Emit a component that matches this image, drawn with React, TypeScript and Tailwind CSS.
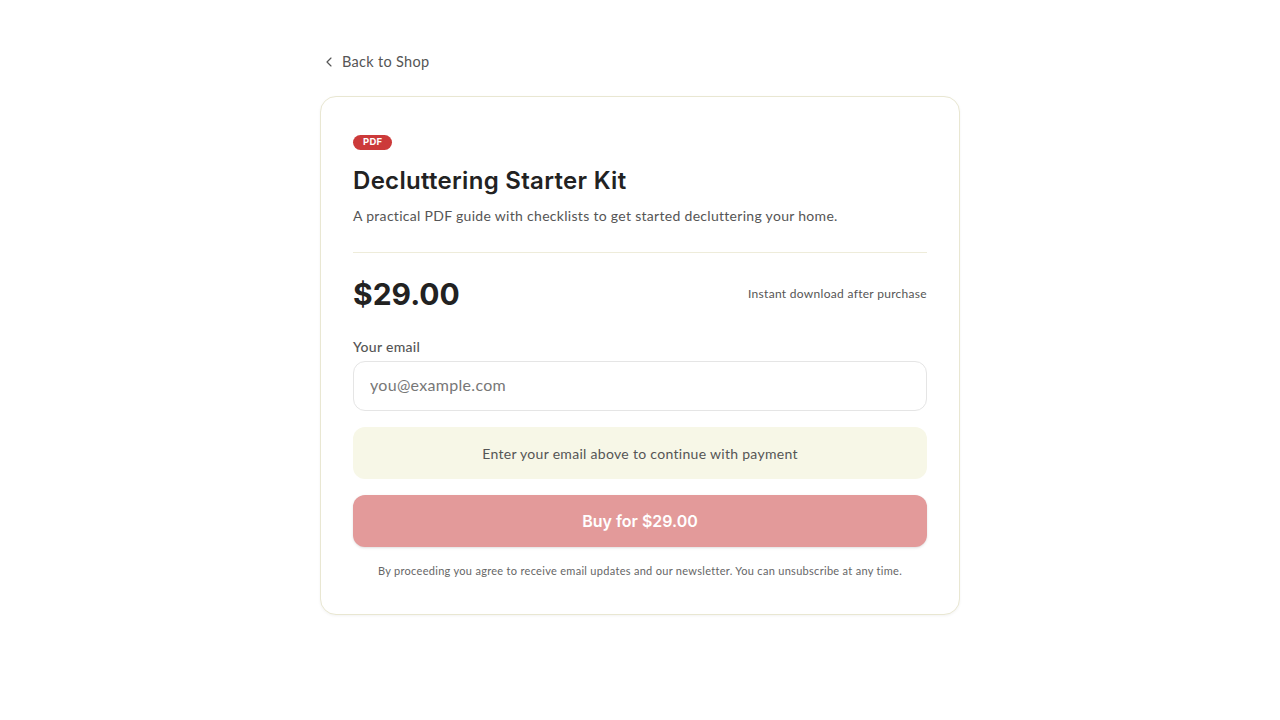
import { ChevronLeft } from 'lucide-react';

const body = { fontFamily: 'Lato, "Open Sans", sans-serif' };

export default function App() {
  return (
    <div className="min-h-screen bg-white tracking-[0.3px] text-[#555]" style={body}>
      <div className="mx-auto w-[640px] pt-[52px] pb-24">
        <a href="#shop" className="mb-6 flex h-5 items-center gap-[5px] text-[14.5px] text-[#555]">
          <ChevronLeft size={16} strokeWidth={1.75} className="ml-[1px]" />
          <span>Back to Shop</span>
        </a>

        <div className="rounded-2xl border border-[#e9e7d2] bg-white px-8 pt-8 pb-[35px] shadow-[0_1px_3px_rgba(0,0,0,0.05)]">
          <span className="mt-[6px] flex h-[15px] w-fit items-center rounded-full bg-[#cc3a3a] px-[10px] font-['Inter'] text-[9.5px] font-bold tracking-wide text-white">
            PDF
          </span>
          <h1 className="mt-[15px] font-['Inter'] text-[24px] font-semibold leading-8 tracking-[0.3px] text-[#222]">
            Decluttering Starter Kit
          </h1>
          <p className="mt-[9px] text-[14px] leading-5 text-[#555]">
            A practical PDF guide with checklists to get started decluttering your home.
          </p>

          <div className="mt-[26px] border-t border-[#eeecda]" />

          <div className="mt-[23px] flex items-center justify-between">
            <span className="font-['Inter'] text-[30px] font-bold leading-9 tracking-normal text-[#222]">$29.00</span>
            <span className="text-[12px] text-[#555]">Instant download after purchase</span>
          </div>

          <label className="mt-[25px] mb-1 block text-[14px] font-medium leading-5 text-[#555]">
            Your email
          </label>
          <input
            type="email"
            placeholder="you@example.com"
            className="block h-[50px] w-full rounded-xl border border-[#e5e5e5] px-4 pb-[3px] text-[16px] text-[#333] placeholder:text-[#777] outline-none"
          />

          <div className="mt-4 flex h-[52px] items-center justify-center rounded-xl bg-[#f7f7e7] text-[14px] text-[#555]">
            Enter your email above to continue with payment
          </div>

          <button
            type="button"
            className="mt-4 flex h-[52px] w-full items-center justify-center rounded-xl bg-[#e39a9a] font-['Inter'] text-[16px] font-semibold tracking-normal text-white shadow-sm"
          >
            Buy for $29.00
          </button>

          <p className="mt-4 text-center text-[11px] leading-4 text-[#666]">
            By proceeding you agree to receive email updates and our newsletter. You can unsubscribe at any time.
          </p>
        </div>
      </div>
    </div>
  );
}
